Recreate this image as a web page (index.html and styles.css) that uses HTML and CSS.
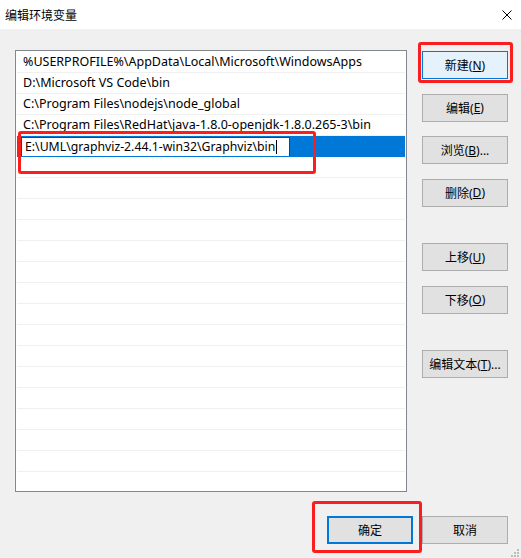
FILE: index.html
```html
<!DOCTYPE html>
<html lang="zh-CN">
<head>
<meta charset="utf-8">
<title>编辑环境变量</title>
<link rel="stylesheet" href="styles.css">
</head>
<body>
<div class="dialog">
  <div class="titlebar">
    <span class="title">编辑环境变量</span>
    <svg class="close" width="10" height="10" viewBox="0 0 10 10"><path d="M0.5 0.5L9.5 9.5M9.5 0.5L0.5 9.5" stroke="#000" stroke-width="1" fill="none"/></svg>
  </div>
  <div class="main">
    <div class="list">
      <div class="row">%USERPROFILE%\AppData\Local\Microsoft\WindowsApps</div>
      <div class="row">D:\Microsoft VS Code\bin</div>
      <div class="row">C:\Program Files\nodejs\node_global</div>
      <div class="row">C:\Program Files\RedHat\java-1.8.0-openjdk-1.8.0.265-3\bin</div>
      <div class="row selected"><span class="edit">E:\UML\graphviz-2.44.1-win32\Graphviz\bin<span class="caret"></span></span></div>
      <div class="row"></div><div class="row"></div><div class="row"></div><div class="row"></div>
      <div class="row"></div><div class="row"></div><div class="row"></div><div class="row"></div>
      <div class="row"></div><div class="row"></div><div class="row"></div><div class="row"></div>
      <div class="row"></div><div class="row"></div><div class="row"></div><div class="row"></div>
    </div>
    <div class="side">
      <div class="btn default">新建(<u>N</u>)</div>
      <div class="btn">编辑(<u>E</u>)</div>
      <div class="btn">浏览(<u>B</u>)...</div>
      <div class="btn">删除(<u>D</u>)</div>
      <div class="btn spaced">上移(<u>U</u>)</div>
      <div class="btn">下移(<u>O</u>)</div>
      <div class="btn spaced">编辑文本(<u>T</u>)...</div>
    </div>
  </div>
  <div class="footer">
    <div class="btn focused">确定</div>
    <div class="btn">取消</div>
  </div>
  <div class="mark mark-new"></div>
  <div class="mark mark-edit"></div>
  <div class="mark mark-ok"></div>
  <svg class="grip" width="9" height="9" viewBox="0 0 9 9">
    <rect x="7" y="1" width="2" height="2" fill="#bcbcbc"/>
    <rect x="4" y="4" width="2" height="2" fill="#bcbcbc"/>
    <rect x="7" y="4" width="2" height="2" fill="#bcbcbc"/>
    <rect x="1" y="7" width="2" height="2" fill="#bcbcbc"/>
    <rect x="4" y="7" width="2" height="2" fill="#bcbcbc"/>
    <rect x="7" y="7" width="2" height="2" fill="#bcbcbc"/>
  </svg>
</div>
</body>
</html>
```
FILE: styles.css
```css
* { box-sizing: border-box; }
html, body { margin: 0; padding: 0; }
body {
  width: 521px;
  height: 558px;
  overflow: hidden;
  background: #f0f0f0;
  font-family: "Noto Sans", "Noto Sans CJK SC", sans-serif;
  font-size: 12px;
  color: #000;
}
.dialog {
  position: relative;
  width: 521px;
  height: 558px;
  display: flex;
  flex-direction: column;
}
.titlebar {
  height: 29px;
  background: #fff;
  display: flex;
  align-items: center;
  justify-content: space-between;
  padding: 0 9px 0 5px;
  flex: none;
}
.title {
  font-family: "Noto Sans CJK SC", sans-serif;
  font-size: 12px;
  line-height: 14px;
}
.close { display: block; }
.main {
  display: flex;
  padding: 21px 13px 0 15px;
  gap: 15px;
}
.list {
  width: 392px;
  height: 442px;
  border: 1px solid #828790;
  background: #fff;
  padding: 1px 1px 0 1px;
  overflow: hidden;
  flex: none;
}
.row {
  height: 21px;
  border-bottom: 1px solid #f0f0f0;
  padding-left: 6px;
  line-height: 20px;
  font-size: 12.5px;
  white-space: nowrap;
  overflow: hidden;
}
.row.selected {
  background: #0078d7;
  border-bottom-color: #0078d7;
  padding: 1px 0 0 4px;
}
.edit {
  display: flex;
  align-items: center;
  width: 269px;
  height: 20px;
  background: #fff;
  border: 1px solid #3c3c3c;
  padding-left: 3px;
  line-height: 18px;
  font-size: 12.25px;
}
.caret {
  display: inline-block;
  width: 1px;
  height: 14px;
  background: #000;
  margin-left: 1px;
}
.side {
  display: flex;
  flex-direction: column;
  gap: 14.5px;
  padding-top: 1px;
  width: 86px;
  flex: none;
}
.btn {
  height: 28px;
  width: 86px;
  background: #e1e1e1;
  border: 1px solid #adadad;
  display: flex;
  align-items: center;
  justify-content: center;
  font-family: "Noto Sans", "Noto Sans CJK SC", sans-serif;
  font-size: 12px;
  white-space: nowrap;
}
.btn u { text-underline-offset: 1px; }
.btn.default {
  background: #e5f1fb;
  border-color: #0078d7;
}
.btn.spaced { margin-top: 22px; }
.btn.focused {
  border: 2px solid #0078d7;
}
.footer {
  display: flex;
  justify-content: flex-end;
  gap: 9px;
  padding: 24px 13px 0 0;
}
.mark {
  position: absolute;
  border: 3px solid #fa1e1e;
  border-radius: 3px;
}
.mark-new { left: 418px; top: 42px; width: 95px; height: 41px; }
.mark-edit { left: 18px; top: 131px; width: 298px; height: 43px; }
.mark-ok { left: 312px; top: 501px; width: 110px; height: 52px; }
.grip {
  position: absolute;
  right: 2px;
  bottom: 1px;
}
```
